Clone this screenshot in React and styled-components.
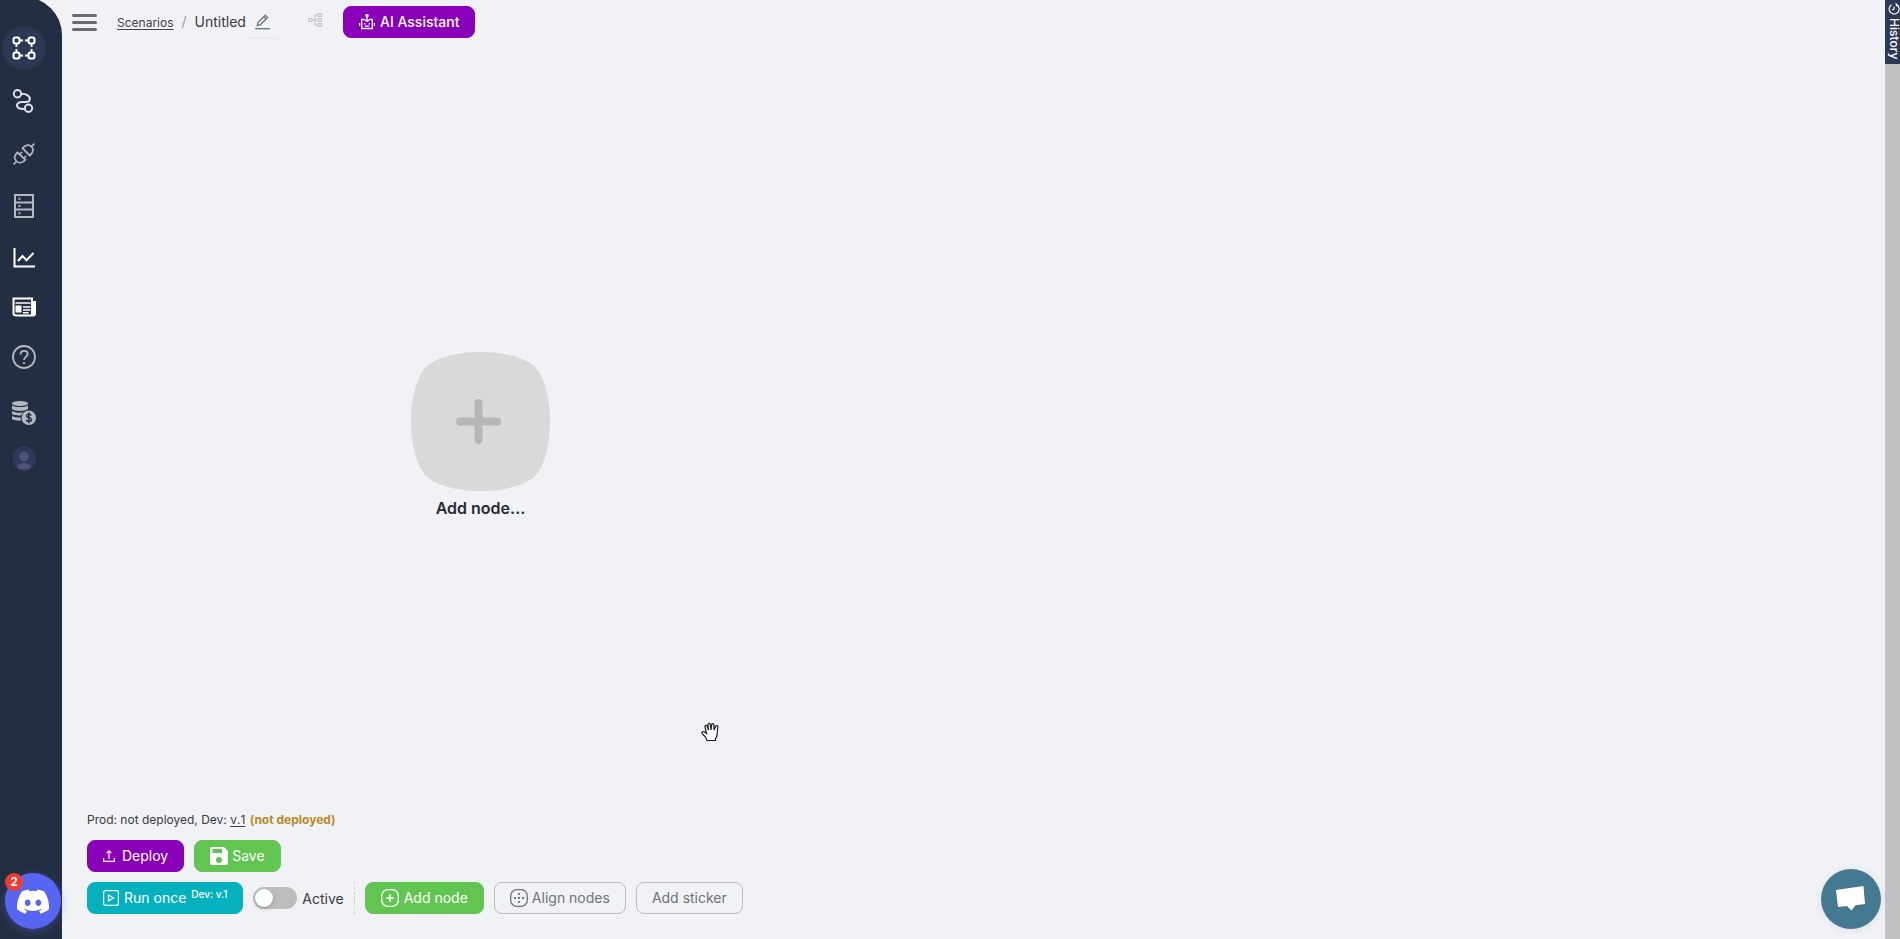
import React, { useState } from "react";
import styled, { createGlobalStyle } from "styled-components";

const palette = {
  page: "#f0f2f6",
  sidebar: "#242e42",
  sidebarActive: "#2c3854",
  purple: "#8a00b8",
  green: "#63c551",
  teal: "#06b1be",
  text: "#3a3a44",
  muted: "#6f7478",
  border: "#b9bbbe",
};

const GlobalStyle = createGlobalStyle`
  * {
    box-sizing: border-box;
  }
  body {
    margin: 0;
    overflow: hidden;
    background: ${palette.page};
    color: ${palette.text};
    font-family: Inter, "Liberation Sans", sans-serif;
    font-size: 14px;
  }
  button {
    font-family: inherit;
    cursor: pointer;
  }
  svg {
    display: block;
    flex: none;
  }
`;

const Layout = styled.div`
  display: flex;
  height: 100vh;
`;

const Sidebar = styled.nav`
  flex: none;
  width: 62px;
  margin-top: -3px;
  padding-top: 25px;
  background: ${palette.sidebar};
  border-radius: 0 38px 0 0;
`;

const NavLink = styled.a`
  display: flex;
  align-items: center;
  justify-content: center;
  width: 48px;
  height: ${(props) => props.$height || 52}px;
  color: ${(props) => props.$color || "#b3b8c1"};
`;

const ActiveCircle = styled.span`
  display: flex;
  align-items: center;
  justify-content: center;
  width: 44px;
  height: 44px;
  border-radius: 50%;
  background: ${palette.sidebarActive};
`;

const Main = styled.main`
  flex: 1;
  min-width: 0;
  display: flex;
  flex-direction: column;
`;

const TopBar = styled.header`
  display: flex;
  align-items: center;
  height: 44px;
  padding-left: 10px;
`;

const MenuButton = styled.button`
  display: flex;
  flex-direction: column;
  gap: 4px;
  width: 25px;
  margin-right: 20px;
  padding: 0;
  border: none;
  background: none;
  span {
    height: 3px;
    border-radius: 2px;
    background: #6f6a71;
  }
`;

const Breadcrumbs = styled.div`
  display: flex;
  align-items: baseline;
  gap: 8px;
  font-size: 14px;
  line-height: 20px;
  a {
    font-size: 12px;
    color: #444;
    text-underline-offset: 2px;
  }
  .slash {
    color: #999;
  }
`;

const IconButton = styled.button`
  display: flex;
  padding: 0;
  border: none;
  background: none;
  color: ${(props) => props.$color};
  margin-left: ${(props) => props.$left || 0}px;
`;

const RenameButton = styled(IconButton)`
  padding: 9px 9px 7px;
  border-bottom: 2px solid #ecedef;
`;

const Button = styled.button`
  display: flex;
  align-items: center;
  gap: ${(props) => props.$gap || 5}px;
  height: 32px;
  padding: 0 15px;
  border: 1px solid ${(props) => props.$bg || palette.border};
  border-radius: 8px;
  background: ${(props) => props.$bg || "transparent"};
  color: ${(props) => (props.$bg ? "white" : palette.muted)};
  font-size: 14px;
  font-weight: ${(props) => props.$weight || 400};
  line-height: 16px;
  white-space: nowrap;
`;

const AssistantButton = styled(Button)`
  margin: 0 0 0 21px;
`;

const Canvas = styled.section`
  position: relative;
  flex: 1;
  cursor: grab;
`;

const NodeButton = styled.button`
  position: absolute;
  left: 349px;
  top: 308px;
  display: flex;
  flex-direction: column;
  align-items: center;
  gap: 7px;
  padding: 0;
  border: none;
  background: none;
  color: #2a2a33;
  font-size: 16px;
  font-weight: 600;
  line-height: 20px;
`;

const Hand = styled.svg`
  position: absolute;
  left: 639px;
  top: 678px;
`;

const Footer = styled.footer`
  display: flex;
  flex-direction: column;
  gap: 10px;
  padding: 0 25px 25px;
`;

const Status = styled.div`
  font-size: 12px;
  line-height: 20px;
  a {
    margin-right: 1px;
    color: inherit;
    font-kerning: none;
    text-underline-offset: 2px;
  }
  b {
    color: #b98a24;
    font-weight: 700;
  }
`;

const Row = styled.div`
  display: flex;
  align-items: center;
  gap: 10px;
`;

const DevTag = styled.span`
  align-self: flex-start;
  margin-top: 4px;
  font-size: 10px;
  font-weight: 500;
  line-height: 14px;
`;

const Toggle = styled.label`
  display: flex;
  align-items: center;
  gap: 5px;
  input {
    appearance: none;
    display: flex;
    align-items: center;
    width: 44px;
    height: 22px;
    margin: 0;
    padding: 0 2px;
    border-radius: 11px;
    background: #bdbdbd;
  }
  input::before {
    content: "";
    width: 18px;
    height: 18px;
    border-radius: 50%;
    background: white;
    box-shadow: 0 2px 4px rgba(0, 35, 11, 0.2);
  }
  input:checked {
    justify-content: flex-end;
    background: ${palette.green};
  }
`;

const Divider = styled.div`
  height: 32px;
  border-left: 1px dashed #cfd1d5;
`;

const RightRail = styled.aside`
  flex: none;
  width: 15px;
  background: #c1c3c2;
`;

const HistoryTab = styled.button`
  display: flex;
  align-items: center;
  gap: 3px;
  width: 15px;
  height: 64px;
  padding: 3px 0 0 3px;
  border: none;
  background: ${palette.sidebarActive};
  color: white;
  font-size: 12px;
  font-weight: 500;
  line-height: 12px;
  writing-mode: vertical-rl;
`;

const DiscordButton = styled.button`
  position: fixed;
  left: 5px;
  bottom: 10px;
  display: flex;
  align-items: center;
  justify-content: center;
  width: 56px;
  height: 56px;
  padding: 0;
  border: none;
  border-radius: 50%;
  background: #5865f2;
  box-shadow: 0 2px 8px rgba(88, 101, 242, 0.4);
`;

const Badge = styled.span`
  position: absolute;
  left: 0;
  top: 0;
  width: 18px;
  height: 18px;
  border-radius: 50%;
  background: #f23b2f;
  color: white;
  font-size: 12px;
  font-weight: 700;
  line-height: 18px;
  text-align: center;
`;

const ChatButton = styled.button`
  position: fixed;
  right: 19px;
  bottom: 10px;
  display: flex;
  align-items: center;
  justify-content: center;
  width: 60px;
  height: 60px;
  padding: 0;
  border: none;
  border-radius: 50%;
  background: #457891;
  box-shadow: 0 1px 8px rgba(0, 0, 0, 0.08);
`;

const Icon = ({ w, h, children, stroke = 2 }) => (
  <svg
    width={w}
    height={h}
    viewBox={`0 0 ${w} ${h}`}
    fill="none"
    stroke="currentColor"
    strokeWidth={stroke}
    aria-hidden="true"
  >
    {children}
  </svg>
);

const ScenariosIcon = () => (
  <Icon w={24} h={24}>
    <rect x="1.5" y="1.5" width="6" height="6" rx="2" />
    <rect x="16.5" y="1.5" width="6" height="6" rx="2" />
    <rect x="1.5" y="16.5" width="6" height="6" rx="2" />
    <rect x="16.5" y="16.5" width="6" height="6" rx="2" />
    <path d="M8 4.5h3M13 4.5h3M8 19.5h3M13 19.5h3M4.5 8v3M4.5 13v3M19.5 8v3M19.5 13v3" />
  </Icon>
);

const RouteIcon = () => (
  <Icon w={24} h={24}>
    <circle cx="5.500" cy="4.800" r="3.700" />
    <circle cx="16.500" cy="19.200" r="3.700" />
    <path d="M9.200 4.800C15 4.800 18 7 17.800 10.300 17.500 13 15 13 10 13 3 13 2.500 20.500 12.800 20" />
  </Icon>
);

const PlugIcon = () => (
  <Icon w={22} h={22} stroke={1.7}>
    <path d="M.6 21.400 4 18M18 4 21.400.6" />
    <path d="M4.500 9.500c-4 3.500-3.500 6-1.200 8.500 2.700 2.700 6 2.300 9.200-1.200zM9.500 5.200c3.500-3.500 6.500-4 9-1.500s2 5.500-1.500 9z" />
    <path d="M6.500 11.500 9 9M10.500 15.500 13 13" />
  </Icon>
);

const ServerIcon = () => (
  <Icon w={20} h={24}>
    <path d="M1 1h18v22H1zM1 8.500h18M1 15.500h18" />
    <path d="M4.500 4.800h2M4.500 12h2M4.500 19.200h2" />
  </Icon>
);

const ChartIcon = () => (
  <Icon w={22} h={20}>
    <path d="M1.500 0v18.500H22" />
    <path d="m5 13 4.500-5 4 4.200L20.500 5" />
  </Icon>
);

const NewsIcon = () => (
  <Icon w={24} h={20}>
    <path d="M20 18.500V1.500H1.500V16q0 2.500 2.500 2.500h17q2 0 2-2V4" />
    <path d="M21.500 4v14" strokeWidth="3" />
    <path d="M3.500 6h15M11 10h7.500M11 13h7.500M11 15.700h5.500" strokeWidth="1.500" />
    <path d="M3.500 8.500h6v7h-6z" fill="currentColor" stroke="none" />
  </Icon>
);

const HelpIcon = () => (
  <Icon w={24} h={24} stroke={1.8}>
    <circle cx="12" cy="12" r="11" />
    <path d="M8.500 9.500c0-5 7.200-4.500 7.200-.5 0 2.700-3.700 2.800-3.700 6" />
    <path d="M12 17v2" />
  </Icon>
);

const CoinsIcon = () => (
  <Icon w={24} h={24}>
    <g fill="currentColor" stroke="none">
      <ellipse cx="8" cy="2.500" rx="8" ry="2.500" />
      <path d="M0 4.500c3 2 13 2 16 0V8c-3 2.500-13 2.500-16 0z" />
      <path d="M0 10c3 2 9 2.300 12 1-1.500 1-2.500 2.200-3 3.400-3 .2-7-.2-9-1.400z" />
      <path d="M0 15c2 1.300 5.500 1.500 8.500 1.400 0 1.200.2 2.300.8 3.200C6 19.800 2 19.500 0 18z" />
      <circle cx="16.800" cy="16.800" r="7.200" />
    </g>
    <path
      d="M19.300 14.500c-1-2-4.800-1.500-4.800.4 0 2.400 5 1.300 5 3.800 0 2.200-4.400 2.300-5.300.2M16.900 11.300v11"
      stroke={palette.sidebar}
      strokeWidth="1.500"
    />
  </Icon>
);

const UserIcon = () => (
  <svg width="24" height="24" viewBox="0 0 24 24" aria-hidden="true">
    <circle cx="12" cy="12" r="12" fill="#2d3957" />
    <g fill="#505179">
      <circle cx="12" cy="10.500" r="4.700" />
      <path d="M5.200 21.800C6 15.500 18 15.500 18.800 21.800 15 24.600 9 24.600 5.200 21.800z" />
    </g>
  </svg>
);

const navItems = [
  { label: "Routes", icon: RouteIcon, color: "#dfe2e7", height: 54 },
  { label: "Connections", icon: PlugIcon },
  { label: "Storage", icon: ServerIcon },
  { label: "Statistics", icon: ChartIcon, color: "white" },
  { label: "News", icon: NewsIcon, color: "white", height: 46 },
  { label: "Help", icon: HelpIcon, height: 54 },
  { label: "Billing", icon: CoinsIcon, height: 58 },
  { label: "Profile", icon: UserIcon, height: 32 },
];

const PencilIcon = () => (
  <Icon w={15} h={16} stroke={1.400}>
    <path d="M3 8.500 10.300 1.200l2.300 2.300-7.300 7.300-3 .7zM9 2.800l2.200 2.200" />
    <path d="M0 14.700h15" />
  </Icon>
);

const TreeIcon = () => (
  <Icon w={14} h={18} stroke={1.200}>
    <path d="M.6 5.600h3.400v2.800H.6zM10 .6h3.400v2.800H10zM10 5.600h3.400v2.800H10zM10 10.600h3.400v2.800H10zM4 7h6M10 2H7v10h3" />
  </Icon>
);

const RobotIcon = () => (
  <Icon w={16} h={16} stroke={1.300}>
    <path d="M5.500 5.500H2.700v9h10.600v-9h-2.800M8 6.500V2.500M.6 9v3M15.400 9v3" />
    <path d="M5.700 9v1.500M10.300 9v1.500M6 12.200h4" />
    <circle cx="8" cy="1.700" r="1.100" fill="currentColor" />
    <path d="m5.500 5.500 2.500 2 2.500-2" />
  </Icon>
);

const DeployIcon = () => (
  <Icon w={12} h={12} stroke={1.200}>
    <path d="M.6 8v3.400h10.800V8M6 9V.8M3.800 3 6 .8 8.200 3" />
  </Icon>
);

const SaveIcon = () => (
  <svg width="18" height="18" viewBox="0 0 18 18" aria-hidden="true">
    <path
      fill="white"
      fillRule="evenodd"
      d="M2 0h12l4 4v12a2 2 0 0 1-2 2H2a2 2 0 0 1-2-2V2a2 2 0 0 1 2-2zM2.500 2v4H12V2zM9 10a3 3 0 1 0 0 6 3 3 0 0 0 0-6z"
    />
  </svg>
);

const RunIcon = () => (
  <Icon w={16} h={16} stroke={1.200}>
    <rect x=".6" y=".6" width="14.800" height="14.800" rx="2" />
    <path d="m5.500 5 5 3-5 3z" />
  </Icon>
);

const AddIcon = () => (
  <Icon w={18} h={18} stroke={1.300}>
    <rect x=".7" y=".7" width="16.600" height="16.600" rx="6" />
    <path d="M9 5.300v7.400M5.300 9h7.400" strokeWidth="1.600" />
  </Icon>
);

const AlignIcon = () => (
  <Icon w={18} h={18} stroke={1.300}>
    <rect x=".7" y=".7" width="16.600" height="16.600" rx="6" />
    <path d="M9 4v10M4 9h10" strokeWidth="1.800" strokeDasharray="2 2" />
  </Icon>
);

const HistoryIcon = () => (
  <Icon w={12} h={12} stroke={1.200}>
    <path d="M3.500 1.800A5 5 0 1 0 8.500 1.600M7.500.3 9 1.600 8 3.300M6 3.700V6l-2 1" />
  </Icon>
);

const Mascot = () => (
  <svg width="32" height="25" viewBox="0 0 127 96" aria-hidden="true">
    <path
      fill="white"
      d="M107.700 8.070A105.150 105.150 0 0 0 81.470 0a72.060 72.060 0 0 0-3.360 6.830 97.680 97.680 0 0 0-29.110 0A72.370 72.370 0 0 0 45.640 0a105.890 105.890 0 0 0-26.250 8.090C2.790 32.650-1.710 56.600.54 80.210a105.730 105.730 0 0 0 32.170 16.150 77.700 77.700 0 0 0 6.890-11.110 68.420 68.420 0 0 1-10.850-5.180c.91-.66 1.800-1.340 2.660-2a75.570 75.570 0 0 0 64.320 0c.87.71 1.760 1.390 2.660 2a68.680 68.680 0 0 1-10.870 5.190 77 77 0 0 0 6.890 11.100 105.250 105.250 0 0 0 32.190-16.140c2.640-27.380-4.510-51.110-18.900-72.150zM42.450 65.690C36.180 65.690 31 60 31 53s5-12.740 11.430-12.740S54 46 53.890 53s-5.050 12.690-11.440 12.690zm42.240 0C78.410 65.690 73.250 60 73.250 53s5-12.740 11.440-12.740S96.230 46 96.120 53s-5.040 12.690-11.430 12.690z"
    />
  </svg>
);

const App = () => {
  const [active, setActive] = useState(false);

  return (
    <>
      <GlobalStyle />
      <Layout>
        <Sidebar>
          <NavLink href="#scenarios" aria-label="Scenarios" $color="white">
            <ActiveCircle>
              <ScenariosIcon />
            </ActiveCircle>
          </NavLink>
          {navItems.map(({ label, icon: NavIcon, color, height }) => (
            <NavLink
              key={label}
              href={`#${label.toLowerCase()}`}
              aria-label={label}
              $color={color}
              $height={height}
            >
              <NavIcon />
            </NavLink>
          ))}
        </Sidebar>

        <Main>
          <TopBar>
            <MenuButton aria-label="Menu">
              <span />
              <span />
              <span />
            </MenuButton>
            <Breadcrumbs>
              <a href="#scenarios">Scenarios</a>
              <span className="slash">/</span>
              <span>Untitled</span>
            </Breadcrumbs>
            <RenameButton aria-label="Rename" $color="#777b80">
              <PencilIcon />
            </RenameButton>
            <IconButton aria-label="Structure" $color="#c6c8cc" $left={29}>
              <TreeIcon />
            </IconButton>
            <AssistantButton $bg={palette.purple} $weight={500}>
              <RobotIcon />
              AI Assistant
            </AssistantButton>
          </TopBar>

          <Canvas>
            <NodeButton>
              <svg width="139" height="139" viewBox="0 0 139 139" aria-hidden="true">
                <path
                  fill="#d9d9d9"
                  d="M0 69.500C0 46 6 24 15 15S46 0 69.500 0 115 6 124 15s15 31 15 54.500-6 45.500-15 54.500-31 15-54.500 15S24 133 15 124 0 93 0 69.500z"
                />
                <path
                  d="M67.500 51v37M49 69.500h37"
                  stroke="#b7b7b7"
                  strokeWidth="8"
                  strokeLinecap="round"
                />
              </svg>
              Add node...
            </NodeButton>
            <Hand width="20" height="20" viewBox="0 0 20 20" aria-hidden="true">
              <path
                d="M6 18.500 4.500 15 1.500 12c-1.500-2 .5-3 2-2l2 1.500L4 5c-.5-2 1.500-2.500 2-1l1.500 4L7 3c0-2 2-2 2.300-.5L10 8l.7-5.500c.3-1.500 2.200-1.200 2.200.5L13 8l1.800-3.700c.8-1.500 2.500-.5 2 1L16.300 9c.2 4-.3 6-1.800 7.500v2z"
                fill="white"
                stroke="#1c1f26"
                strokeWidth="1.200"
              />
            </Hand>
          </Canvas>

          <Footer>
            <Status>
              Prod: not deployed, Dev: <a href="#version">v.1</a> <b>(not deployed)</b>
            </Status>
            <Row>
              <Button $bg={palette.purple} $gap={7}>
                <DeployIcon />
                Deploy
              </Button>
              <Button $bg={palette.green} $gap={4}>
                <SaveIcon />
                Save
              </Button>
            </Row>
            <Row>
              <Button $bg={palette.teal}>
                <RunIcon />
                Run once
                <DevTag>Dev: v.1</DevTag>
              </Button>
              <Toggle>
                <input
                  type="checkbox"
                  checked={active}
                  onChange={(e) => setActive(e.target.checked)}
                />
                Active
              </Toggle>
              <Divider />
              <Button $bg={palette.green}>
                <AddIcon />
                Add node
              </Button>
              <Button $gap={4}>
                <AlignIcon />
                Align nodes
              </Button>
              <Button>Add sticker</Button>
            </Row>
          </Footer>
        </Main>

        <RightRail>
          <HistoryTab>
            <HistoryIcon />
            History
          </HistoryTab>
        </RightRail>
      </Layout>

      <DiscordButton aria-label="Discord">
        <Mascot />
        <Badge>2</Badge>
      </DiscordButton>
      <ChatButton aria-label="Chat">
        <svg width="30" height="26" viewBox="0 0 30 26" aria-hidden="true">
          <path fill="white" d="M0 4 27.500 0l1.500 18-9.500 1.200-4 5.300-4.500-4.500-9 1z" />
        </svg>
      </ChatButton>
    </>
  );
};

export default App;
